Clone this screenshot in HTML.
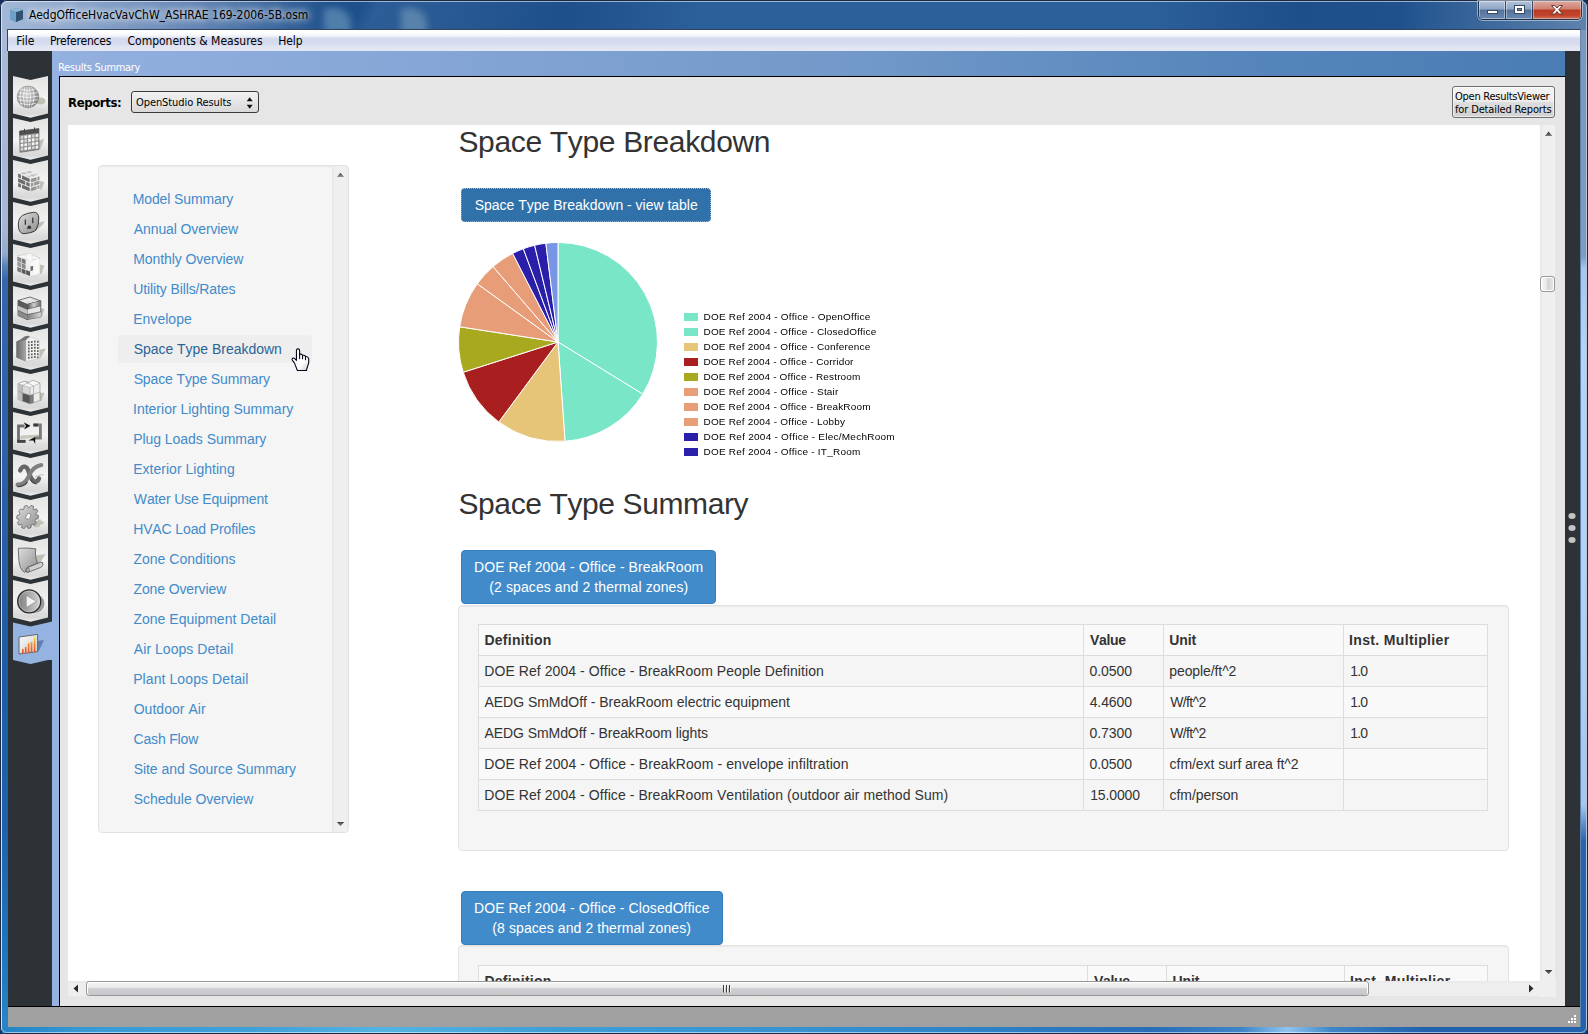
<!DOCTYPE html>
<html lang="en">
<head>
<meta charset="utf-8">
<title>AedgOfficeHvacVavChW_ASHRAE 169-2006-5B.osm</title>
<style>
*{box-sizing:border-box;}
html,body{margin:0;padding:0;}
body{width:1588px;height:1034px;overflow:hidden;position:relative;background:#0d2a5a;font-family:"DejaVu Sans Condensed","DejaVu Sans","Liberation Sans",sans-serif;font-size:11px;color:#000;}
.abs{position:absolute;}
/* ---------- window frame ---------- */
#frame{left:0;top:0;width:1588px;height:1034px;border-radius:7px 7px 6px 6px;overflow:hidden;
 background:
  linear-gradient(90deg,rgba(170,190,220,.95) 0px,rgba(160,182,214,.9) 60px,rgba(120,150,195,.75) 200px,rgba(40,90,150,.2) 330px,rgba(30,80,140,0) 420px),
  linear-gradient(115deg,rgba(255,255,255,0) 330px,rgba(120,160,210,.18) 345px,rgba(120,160,210,.12) 420px,rgba(255,255,255,0) 520px),
  linear-gradient(90deg,#1d4f8a 0,#1d4f8a 560px,#2c609a 700px,#2c609a 1150px,#1d4f8a 1300px,#1f528d 1400px,#5f83ad 1588px);
 box-shadow:inset 0 0 0 1px #1a2a45;}
#frame-hl{left:1px;top:1px;width:1586px;height:1032px;border-radius:6px;border:1px solid rgba(255,255,255,.55);pointer-events:none;}
#leftframe{left:2px;top:30px;width:6px;height:998px;background:linear-gradient(180deg,#a9bbd6 0,#a5b7d3 200px,#93a9cc 224px,#5a82ba 236px,#3466ac 250px,#2b62a9 420px,#1f5ba6 640px,#1e62ad 800px,#1f77bd 930px,#2b86c6 1004px);}
#rightframe{left:1581px;top:30px;width:5px;height:998px;background:linear-gradient(180deg,#7c97bd 0,#7f9bc2 226px,#a6c6ee 238px,#b6d4f7 330px,#b3d1f5 560px,#a6c6ee 775px,#5a8cca 795px,#2a63ad 812px,#2262ad 1004px);}
#bottomframe{left:2px;top:1027px;width:1584px;height:6px;background:linear-gradient(90deg,#2383c4 0,#3a9ad6 90px,#3f9fd8 250px,#55b3e2 380px,#3f9dd6 560px,#3792d0 800px,#2d80c4 1000px,#2a6db7 1150px,#3f86c8 1240px,#8fc4ee 1285px,#3f86c8 1330px,#2262ad 1420px,#2262ad 1588px);}
/* ---------- title bar ---------- */
#title{left:29px;top:7px;font-size:12px;line-height:16px;color:#000;white-space:pre;text-shadow:0 0 6px rgba(255,255,255,.9),0 0 10px rgba(255,255,255,.7),0 0 14px rgba(255,255,255,.5);}
#capbtns{left:1478px;top:1px;width:104px;height:19px;border:1px solid rgba(20,30,50,.75);border-top:none;border-radius:0 0 5px 5px;overflow:hidden;box-shadow:0 0 0 1px rgba(255,255,255,.45);}
#capbtns div{position:absolute;top:0;height:18px;}
#bmin{left:0;width:27px;background:linear-gradient(180deg,#b4c4da 0,#8da5c4 45%,#52729c 50%,#6a89b2 100%);border-right:1px solid rgba(20,30,50,.7);box-shadow:inset 0 0 0 1px rgba(255,255,255,.4);}
#bmax{left:27px;width:27px;background:linear-gradient(180deg,#b4c4da 0,#8da5c4 45%,#52729c 50%,#6a89b2 100%);border-right:1px solid rgba(20,30,50,.7);box-shadow:inset 0 0 0 1px rgba(255,255,255,.4);}
#bclose{left:54px;width:48px;background:linear-gradient(180deg,#dcaaa2 0,#cf7f72 45%,#b93a24 50%,#c1452c 80%,#cf7258 100%);box-shadow:inset 0 0 0 1px rgba(255,255,255,.35);}
/* ---------- menu bar ---------- */
#menubar{left:7px;top:29px;width:1574px;height:22px;border:1px solid #33425e;border-bottom:none;border-right-color:#6d86ab;
 background:linear-gradient(180deg,#ffffff 0,#fbfcfe 4px,#e9ecf6 7px,#d5daee 8px,#d6dbee 14px,#e1e5f3 17px,#e4e8f4 21px);}
#menubar span{position:absolute;top:3px;font-size:12px;line-height:16px;white-space:pre;letter-spacing:-.12px;}
/* ---------- app ---------- */
#app{left:8px;top:51px;width:1572px;height:976px;background:#e6e6e6;}
#lside{left:0;top:0;width:44px;height:955px;background:#2c3235;}
#lstrip{left:44px;top:0;width:7px;height:955px;background:#95b3e0;}
#lline{left:51px;top:25px;width:1px;height:930px;background:#000;}
#rside{left:1557px;top:0;width:15px;height:955px;background:#2c3235;}
#hdr{left:44px;top:0;width:1513px;height:25px;background:linear-gradient(90deg,#93b0df 0,#88a8d8 300px,#7299c9 800px,#5585bb 1200px,#4a7db4 1513px);}
#hdrline{left:51px;top:25px;width:1506px;height:1px;background:#000;}
#hdr span{position:absolute;left:6px;top:10px;color:#fff;font-size:11px;line-height:14px;letter-spacing:-.3px;white-space:pre;}
#status{left:0;top:955px;width:1572px;height:21px;background:#a0a0a0;border-top:1px solid #000;}
/* toolbar */
#replabel{left:60px;top:44px;font-weight:bold;font-size:13px;line-height:16px;letter-spacing:-.38px;font-family:"DejaVu Sans Condensed","DejaVu Sans",sans-serif;}
#combo{left:123px;top:40px;width:128px;height:22px;border:1px solid #3a3a3a;border-radius:3px;background:linear-gradient(180deg,#f1f1f1 0,#e6e6e6 50%,#d9d9d9 100%);}
#combo span{position:absolute;left:4px;top:4px;font-size:11px;line-height:14px;letter-spacing:-.08px;white-space:pre;}
#openbtn{left:1444px;top:35px;width:103px;height:32px;border:1px solid #6e6e6e;border-radius:3px;background:linear-gradient(180deg,#f3f3f3 0,#ececec 49%,#dedede 50%,#d1d1d1 100%);font-size:11px;line-height:13px;letter-spacing:-.08px;padding:3px 0 0 2px;white-space:pre;box-shadow:inset 0 0 0 1px rgba(255,255,255,.6);}
/* ---------- web view ---------- */
#web{left:60px;top:74px;width:1472px;height:856px;background:#fff;overflow:hidden;font-family:"Liberation Sans",Arial,sans-serif;font-size:14px;line-height:20px;color:#333;font-kerning:none;}
#vscroll{left:1532px;top:74px;width:15px;height:855px;background:linear-gradient(90deg,#e6e6e6 0,#efefef 3px,#f0f0f0 100%);}
#hscroll{left:60px;top:930px;width:1471px;height:15px;background:linear-gradient(180deg,#e8e8e8 0,#efefef 3px,#eeeeee 100%);}
#corner{left:1531px;top:929px;width:17px;height:17px;background:#efefef;}
.thumbv{background:linear-gradient(90deg,#f7f7f7 0,#e8e8e8 45%,#d2d2d6 46%,#e6e6e8 100%);border:1px solid #979797;border-radius:3px;box-shadow:inset 0 0 0 1px #fff;}
.thumbh{background:linear-gradient(180deg,#f7f7f7 0,#e8e8e8 45%,#d2d2d5 46%,#c6c6ca 100%);border:1px solid #979797;border-radius:3px;box-shadow:inset 0 1px 0 #fff,inset 1px 0 0 #fff,inset -1px 0 0 #fff;}
h2{position:absolute;margin:0;font-weight:500;font-size:30px;line-height:33px;color:#333;white-space:pre;font-family:"Liberation Sans",Arial,sans-serif;}
.btn{position:absolute;border:1px solid #357ebd;border-radius:4px;background:#428bca;color:#fff;font-size:14px;line-height:20px;padding:6px 12px;text-align:center;white-space:pre;}
.well{position:absolute;background:#f5f5f5;border:1px solid #e3e3e3;border-radius:4px;box-shadow:inset 0 1px 1px rgba(0,0,0,.05);}
table{position:absolute;border-collapse:collapse;border:1px solid #ddd;table-layout:fixed;font-size:14px;line-height:20px;color:#333;}
td,th{border:1px solid #ddd;padding:5px;text-align:left;height:31px;white-space:pre;overflow:hidden;}
tr:nth-child(odd) td,tr:nth-child(odd) th{background:#f9f9f9;}
th{font-weight:bold;}
#nav a{position:absolute;left:19px;width:194px;height:28px;padding:4px 0 4px 15px;color:#428bca;border-radius:4px;white-space:pre;text-decoration:none;}
#nav a.hov{background:#eee;color:#2a6496;}
.leg{position:absolute;left:616px;font-size:10px;line-height:12px;color:#000;white-space:pre;}
.leg i{position:absolute;left:0;top:1px;width:14px;height:8px;}
.leg span{position:absolute;left:19px;top:-1px;transform:scaleY(.88);transform-origin:0 9.500px;}
.btn span{white-space:pre;}
</style>
</head>
<body>
<div id="frame" class="abs"></div>
<div class="abs" style="left:324px;top:8px;width:27px;height:26px;background:rgba(150,190,215,.42);border-radius:2px 16px 0 0;filter:blur(3.500px)"></div><div class="abs" style="left:401px;top:8px;width:26px;height:26px;background:rgba(150,185,205,.42);border-radius:2px 16px 0 0;filter:blur(3.500px)"></div>
<div id="leftframe" class="abs"></div>
<div id="rightframe" class="abs"></div>
<div id="bottomframe" class="abs"></div>
<div id="frame-hl" class="abs"></div>

<!-- title bar -->
<svg class="abs" style="left:8.500px;top:6.500px" width="15" height="16" viewBox="0 0 15 16">
 <polygon points="1,3 7,1 14,3 14,12 7,15 1,12" fill="#4a6f95"/>
 <polygon points="1,3 7,5 7,15 1,12" fill="#6fa0c8"/>
 <polygon points="7,5 14,3 14,12 7,15" fill="#2f4f73"/>
 <polygon points="1,3 7,1 14,3 7,5" fill="#8fb7d8"/>
</svg>
<div id="title" class="abs">AedgOfficeHvacVavChW_ASHRAE 169-2006-5B.osm</div>
<div id="capbtns" class="abs">
 <div id="bmin"><svg width="27" height="18"><rect x="8.500" y="9.500" width="10" height="3" fill="#fff" stroke="#3b4a60" stroke-width="1"/></svg></div>
 <div id="bmax"><svg width="27" height="18"><rect x="8.500" y="4.500" width="10" height="8" fill="#fff" stroke="#3b4a60" stroke-width="1"/><rect x="11.500" y="7.500" width="4" height="2" fill="#6d8bb3" stroke="#3b4a60" stroke-width="1"/></svg></div>
 <div id="bclose"><svg width="48" height="18"><path d="M18.500 4.500h3.200l2.300 2.600 2.300-2.600h3.200l-3.800 4.300 3.800 4.200h-3.300l-2.200-2.500-2.200 2.500h-3.300l3.800-4.200z" fill="#fff" stroke="#5a2a22" stroke-width=".9"/></svg></div>
</div>

<!-- menu bar -->
<div id="menubar" class="abs">
 <span style="left:8.300px;letter-spacing:0">File</span>
 <span style="left:42px;letter-spacing:-.2px">Preferences</span>
 <span style="left:119.500px;letter-spacing:0">Components &amp; Measures</span>
 <span style="left:270.300px">Help</span>
</div>

<!-- application -->
<div id="app" class="abs">
 <div id="hdr" class="abs"><span>Results Summary</span></div>
 <div id="lside" class="abs"></div>
 <div id="lstrip" class="abs"></div>
 <div id="rside" class="abs"></div>
 <div id="hdrline" class="abs"></div>
 <div id="lline" class="abs"></div>
 <!--TABS--><svg class="abs" style="left:0;top:0" width="52" height="955" viewBox="8 51 52 955"><defs><linearGradient id="tg" x1="0" y1="0" x2="0" y2="1"><stop offset="0" stop-color="#e4e4e4"/><stop offset=".12" stop-color="#e7e7e6"/><stop offset=".55" stop-color="#f3f3f3"/><stop offset=".8" stop-color="#dcdcdc"/><stop offset=".9" stop-color="#d9d9d9"/><stop offset="1" stop-color="#efefef"/></linearGradient><radialGradient id="gl" cx=".42" cy=".38" r=".68"><stop offset="0" stop-color="#d2d2d2"/><stop offset=".55" stop-color="#a6a6a6"/><stop offset="1" stop-color="#6e6e6e"/></radialGradient><linearGradient id="gm" x1="0" y1="0" x2="1" y2="1"><stop offset="0" stop-color="#dedede"/><stop offset="1" stop-color="#8e8e8e"/></linearGradient><linearGradient id="gd" x1="0" y1="0" x2="1" y2="0"><stop offset="0" stop-color="#6a6a6a"/><stop offset="1" stop-color="#a8a8a8"/></linearGradient><linearGradient id="gh" x1="0" y1="0" x2="1" y2="0"><stop offset="0" stop-color="#4a4a4a"/><stop offset=".5" stop-color="#cfcfcf"/><stop offset="1" stop-color="#6a6a6a"/></linearGradient><linearGradient id="gp" x1="0" y1="0" x2="1" y2="0"><stop offset="0" stop-color="#7d7d7d"/><stop offset="1" stop-color="#d5d5d5"/></linearGradient><linearGradient id="gb" x1="0" y1="1" x2="0" y2="0"><stop offset="0" stop-color="#e2502a"/><stop offset=".6" stop-color="#f08a2a"/><stop offset="1" stop-color="#fbd23a"/></linearGradient><linearGradient id="gw" x1="0" y1="0" x2="1" y2="1"><stop offset="0" stop-color="#fafafa"/><stop offset="1" stop-color="#cfcfcf"/></linearGradient></defs><polygon points="13,76 30.5,80 48,76 48,113.6 30.5,117.8 13,113.6" fill="url(#tg)"/><polygon points="13,118 30.5,122 48,118 48,155.6 30.5,159.8 13,155.6" fill="url(#tg)"/><polygon points="13,160 30.5,164 48,160 48,197.6 30.5,201.8 13,197.6" fill="url(#tg)"/><polygon points="13,202 30.5,206 48,202 48,239.6 30.5,243.8 13,239.6" fill="url(#tg)"/><polygon points="13,244 30.5,248 48,244 48,281.6 30.5,285.8 13,281.6" fill="url(#tg)"/><polygon points="13,286 30.5,290 48,286 48,323.6 30.5,327.8 13,323.6" fill="url(#tg)"/><polygon points="13,328 30.5,332 48,328 48,365.6 30.5,369.8 13,365.6" fill="url(#tg)"/><polygon points="13,370 30.5,374 48,370 48,407.6 30.5,411.8 13,407.6" fill="url(#tg)"/><polygon points="13,412 30.5,416 48,412 48,449.6 30.5,453.8 13,449.6" fill="url(#tg)"/><polygon points="13,454 30.5,458 48,454 48,491.6 30.5,495.8 13,491.6" fill="url(#tg)"/><polygon points="13,496 30.5,500 48,496 48,533.6 30.5,537.8 13,533.6" fill="url(#tg)"/><polygon points="13,538 30.5,542 48,538 48,575.6 30.5,579.8 13,575.6" fill="url(#tg)"/><polygon points="13,580 30.5,584 48,580 48,617.6 30.5,621.8 13,617.6" fill="url(#tg)"/><polygon points="13,622.5 30.5,626.5 48,622.5 52,621.5 59,621.5 59,660 52,660 48,660 30.5,664 13,660" fill="#95b3e0"/><g transform="translate(13 76)"><ellipse cx="27.5" cy="25" rx="5" ry="3.600" fill="#bfc1b5"/><circle cx="15" cy="20.900" r="10.900" fill="url(#gl)"/><path d="M6.8 12.9Q15 15.9 23.2 12.9M4.7 16.5Q15 19.5 25.3 16.5M4.1 20.1Q15 23.1 25.9 20.1M4.7 23.7Q15 26.7 25.3 23.7M6.8 27.3Q15 30.3 23.2 27.3M9.9 10.300Q3.9 20.900 9.9 31.500M11.9 10.300Q8.9 20.900 11.9 31.500M14.0 10.300Q14.0 20.900 14.0 31.500M16.1 10.300Q19.1 20.900 16.1 31.500M18.1 10.300Q24.1 20.900 18.1 31.500" fill="none" stroke="#ffffff" stroke-width=".8" opacity=".8"/><circle cx="15" cy="20.900" r="10.900" fill="none" stroke="#8a8a8a" stroke-width=".6"/></g><g transform="translate(13 118)"><polygon points="26,22.500 31.200,20.800 27.600,31 26,31.500" fill="#bfc1b5"/><polygon points="6.500,13 26,10.500 26,31.500 7,34.300" fill="#8f8f8f" stroke="#555" stroke-width=".6"/><polygon points="6.500,13 26,10.500 26,14.800 6.600,17.300" fill="#4f4f4f"/><path d="M11.500 10.800v4M21.500 9.500v4" stroke="#444" stroke-width="1"/><polygon points="7.60,18.16 10.30,17.81 10.30,20.61 7.60,20.96" fill="#cfcfcf"/><polygon points="11.35,17.68 14.05,17.33 14.05,20.13 11.35,20.48" fill="#f4f4f4"/><polygon points="15.10,17.20 17.80,16.85 17.80,19.65 15.10,20.00" fill="#f4f4f4"/><polygon points="18.85,16.72 21.55,16.37 21.55,19.17 18.85,19.52" fill="#cfcfcf"/><polygon points="22.60,16.24 25.30,15.89 25.30,18.69 22.60,19.04" fill="#f4f4f4"/><polygon points="7.60,22.06 10.30,21.71 10.30,24.51 7.60,24.86" fill="#f4f4f4"/><polygon points="11.35,21.58 14.05,21.23 14.05,24.03 11.35,24.38" fill="#cfcfcf"/><polygon points="15.10,21.10 17.80,20.75 17.80,23.55 15.10,23.90" fill="#f4f4f4"/><polygon points="18.85,20.62 21.55,20.27 21.55,23.07 18.85,23.42" fill="#f4f4f4"/><polygon points="22.60,20.14 25.30,19.79 25.30,22.59 22.60,22.94" fill="#cfcfcf"/><polygon points="7.60,25.96 10.30,25.61 10.30,28.41 7.60,28.76" fill="#f4f4f4"/><polygon points="11.35,25.48 14.05,25.13 14.05,27.93 11.35,28.28" fill="#f4f4f4"/><polygon points="15.10,25.00 17.80,24.65 17.80,27.45 15.10,27.80" fill="#cfcfcf"/><polygon points="18.85,24.52 21.55,24.17 21.55,26.97 18.85,27.32" fill="#f4f4f4"/><polygon points="22.60,24.04 25.30,23.69 25.30,26.49 22.60,26.84" fill="#f4f4f4"/><polygon points="7.60,29.86 10.30,29.51 10.30,32.31 7.60,32.66" fill="#cfcfcf"/><polygon points="11.35,29.38 14.05,29.03 14.05,31.83 11.35,32.18" fill="#f4f4f4"/><polygon points="15.10,28.90 17.80,28.55 17.80,31.35 15.10,31.70" fill="#f4f4f4"/><polygon points="18.85,28.42 21.55,28.07 21.55,30.87 18.85,31.22" fill="#cfcfcf"/><polygon points="22.60,27.94 25.30,27.59 25.30,30.39 22.60,30.74" fill="#f4f4f4"/></g><g transform="translate(13 160)"><polygon points="26.900,21 31.500,22 28.500,29.500 26.900,30" fill="#bfc1b5"/><polygon points="4.60,12.60 16.70,10.00 26.90,15.50 17.30,18.30" fill="#f4f4f4"/><polygon points="4.60,12.60 17.30,18.30 17.30,32.10 4.60,27.00" fill="#f0f0f0"/><polygon points="17.30,18.30 26.90,15.50 26.90,28.80 17.30,32.10" fill="#f6f6f6"/><polygon points="5.11,13.55 7.90,14.79 7.90,18.50 5.11,17.28" fill="#6c6c6c"/><polygon points="24.40,16.90 26.52,16.28 26.52,19.74 24.40,20.39" fill="#989898"/><polygon points="8.92,15.25 16.66,18.71 16.66,22.30 8.92,18.94" fill="#6c6c6c"/><polygon points="17.78,18.85 23.64,17.13 23.64,20.63 17.78,22.43" fill="#989898"/><polygon points="5.11,18.22 12.22,21.29 12.22,24.94 5.11,21.96" fill="#6c6c6c"/><polygon points="21.14,22.28 26.52,20.61 26.52,24.07 21.14,25.82" fill="#989898"/><polygon points="13.24,21.72 16.66,23.20 16.66,26.80 13.24,25.36" fill="#6c6c6c"/><polygon points="17.78,23.33 20.37,22.52 20.37,26.07 17.78,26.91" fill="#989898"/><polygon points="5.11,22.89 7.90,24.05 7.90,27.76 5.11,26.63" fill="#6c6c6c"/><polygon points="24.40,25.63 26.52,24.94 26.52,28.40 24.40,29.12" fill="#989898"/><polygon points="8.92,24.48 16.66,27.70 16.66,31.29 8.92,28.17" fill="#6c6c6c"/><polygon points="17.78,27.80 23.64,25.88 23.64,29.38 17.78,31.38" fill="#989898"/><polygon points="6.82,12.96 11.20,11.99 14.91,13.79 10.82,14.78" fill="#c2c2c2"/><polygon points="12.39,11.73 16.77,10.76 20.10,12.52 16.01,13.52" fill="#c2c2c2"/><polygon points="12.82,15.69 14.95,15.15 18.79,16.95 16.82,17.51" fill="#c2c2c2"/><polygon points="16.01,14.87 19.63,13.95 23.12,15.73 19.77,16.67" fill="#c2c2c2"/><polygon points="20.49,13.73 21.98,13.35 25.29,15.12 23.91,15.51" fill="#c2c2c2"/></g><g transform="translate(13 202)"><polygon points="24.500,21 31.500,19 30,22.500 23.500,28" fill="#bfc1b5"/><path d="M9.700 13.300Q14 11 20.500 10.300Q25.500 10 25.800 16Q26 23 23 28Q21 30.500 11 31.700Q5.500 31.500 5.300 23Q5.300 16 9.700 13.300Z" fill="url(#gm)" stroke="#2e2e2e" stroke-width=".9"/><path d="M12.300 17.500v5.200M19.800 15.600v5.600" stroke="#222" stroke-width="1.100" fill="none"/><path d="M14.200 27Q14.300 23.600 16.300 23.500Q18.300 23.500 18.300 26.400Z" fill="#333"/></g><g transform="translate(13 244)"><polygon points="26.600,20.500 31.500,21.500 28.500,29.500 26.600,30.500" fill="#bfc1b5"/><polygon points="4.00,12.10 16.70,9.30 26.60,14.00 17.30,17.20" fill="#f6f6f6" stroke="#9a9a9a" stroke-width=".4"/><polygon points="4.00,12.10 17.30,17.20 17.30,32.50 4.00,27.40" fill="#f4f4f4"/><polygon points="17.30,17.20 26.60,14.00 26.60,29.70 17.30,32.50" fill="#fafafa" stroke="#b0b0b0" stroke-width=".3"/><polygon points="4.27,12.51 8.17,14.00 8.17,18.49 4.27,17.00" fill="#8a8a8a"/><polygon points="17.49,17.44 20.21,16.51 20.21,21.03 17.49,21.93" fill="#f8f8f8"/><polygon points="8.70,14.21 12.60,15.70 12.60,20.19 8.70,18.70" fill="#787878"/><polygon points="20.59,16.38 23.31,15.44 23.31,20.01 20.59,20.91" fill="#f8f8f8"/><polygon points="13.13,15.91 17.03,17.40 17.03,21.89 13.13,20.40" fill="#f0f0f0"/><polygon points="23.69,15.31 26.41,14.38 26.41,18.98 23.69,19.88" fill="#f8f8f8"/><polygon points="4.27,17.61 8.17,19.10 8.17,23.59 4.27,22.10" fill="#9c9c9c"/><polygon points="17.49,22.54 20.21,21.65 20.21,26.17 17.49,27.04" fill="#6c6c6c"/><polygon points="8.70,19.31 12.60,20.80 12.60,25.29 8.70,23.80" fill="#8a8a8a"/><polygon points="20.59,21.53 23.31,20.63 23.31,25.19 20.59,26.05" fill="#f8f8f8"/><polygon points="13.13,21.01 17.03,22.50 17.03,26.99 13.13,25.50" fill="#ececec"/><polygon points="23.69,20.51 26.41,19.61 26.41,24.21 23.69,25.07" fill="#f8f8f8"/><polygon points="4.27,22.71 8.17,24.20 8.17,28.69 4.27,27.20" fill="#7c7c7c"/><polygon points="17.49,27.65 20.21,26.79 20.21,31.31 17.49,32.14" fill="#f2f2f2"/><polygon points="8.70,24.41 12.60,25.90 12.60,30.39 8.70,28.90" fill="#5c5c5c"/><polygon points="20.59,26.67 23.31,25.81 23.31,30.38 20.59,31.20" fill="#f8f8f8"/><polygon points="13.13,26.11 17.03,27.60 17.03,32.09 13.13,30.60" fill="#585858"/><polygon points="23.69,25.70 26.41,24.84 26.41,29.44 23.69,30.27" fill="#f8f8f8"/><polygon points="4.91,12.22 8.34,11.45 11.45,12.71 8.25,13.51" fill="#fbfbfb"/><polygon points="9.10,11.28 12.53,10.51 15.35,11.74 12.15,12.54" fill="#ededed"/><polygon points="13.28,10.34 16.72,9.57 19.25,10.77 16.05,11.56" fill="#fbfbfb"/><polygon points="9.31,13.92 12.43,13.11 15.54,14.37 12.65,15.20" fill="#ededed"/><polygon points="13.12,12.93 16.24,12.13 19.06,13.35 16.17,14.19" fill="#fbfbfb"/><polygon points="16.93,11.95 20.05,11.14 22.59,12.34 19.70,13.17" fill="#ededed"/><polygon points="13.71,15.61 16.52,14.77 19.63,16.03 17.05,16.90" fill="#fbfbfb"/><polygon points="17.14,14.58 19.95,13.74 22.78,14.97 20.20,15.84" fill="#ededed"/><polygon points="20.57,13.56 23.39,12.71 25.92,13.91 23.34,14.78" fill="#fbfbfb"/></g><g transform="translate(13 286)"><polygon points="27.800,22 31.500,23 29,30.500 27.800,31" fill="#bfc1b5"/><polygon points="5,14.500 17,11 27.800,15 14,18.500" fill="url(#gw)" stroke="#333" stroke-width=".7"/><polygon points="5,14.500 14,18.500 14,33.500 5,29.500" fill="url(#gd)" stroke="#333" stroke-width=".7"/><polygon points="14,18.500 27.800,15 27.800,31 14,33.500" fill="#e6e6e6" stroke="#333" stroke-width=".7"/><polygon points="14,18.500 27.800,15 27.800,19.800 14,23.300" fill="url(#gh)"/><polygon points="14,28.600 27.800,25.800 27.800,31 14,33.500" fill="url(#gp)"/><polygon points="5,14.500 14,18.500 14,23.300 5,19.300" fill="#5a5a5a"/><polygon points="5,24.500 14,28.600 14,33.500 5,29.500" fill="#8a8a8a"/><polygon points="5,19.300 14,23.300 14,28.600 5,24.500" fill="#c4c4c4"/><path d="M5 19.300l9 4 13.800-3.500M5 24.500l9 4.100 13.800-2.800" stroke="#444" stroke-width=".6" fill="none"/></g><g transform="translate(13 328)"><polygon points="26.500,21.500 33,20.500 27.500,30 26.500,30.500" fill="#bfc1b5"/><path d="M3.500 29.500V13.500L8.500 10.800Q13 6.500 17 8.500L13 12V33.500Z" fill="#737373"/><path d="M13 12Q17 8 21 9.500L26.500 12.500V30.500L13 33.500Z" fill="#f0f0f0" stroke="#bbb" stroke-width=".4"/><path d="M3.500 13.500L13 12V33.500L3.500 29.500Z" fill="url(#gd)"/><path d="M15.2 13.3h1.300v1.900h-1.300zM18.2 13.0h1.300v1.900h-1.300zM21.2 12.6h1.300v1.900h-1.300zM24.2 12.8h1.300v1.900h-1.300zM15.2 16.4h1.300v1.900h-1.300zM18.2 16.1h1.300v1.900h-1.300zM21.2 15.7h1.300v1.900h-1.300zM24.2 16.0h1.300v1.900h-1.300zM15.2 19.5h1.300v1.900h-1.300zM18.2 19.1h1.300v1.900h-1.300zM21.2 18.8h1.300v1.900h-1.300zM24.2 19.1h1.300v1.900h-1.300zM15.2 22.6h1.300v1.900h-1.300zM18.2 22.2h1.300v1.900h-1.300zM21.2 21.9h1.300v1.900h-1.300zM24.2 22.2h1.300v1.900h-1.300zM15.2 25.7h1.300v1.900h-1.300zM18.2 25.4h1.300v1.900h-1.300zM21.2 25.0h1.300v1.900h-1.300zM24.2 25.3h1.300v1.900h-1.300zM15.2 28.8h1.300v1.900h-1.300zM18.2 28.4h1.300v1.900h-1.300zM21.2 28.1h1.300v1.900h-1.300zM24.2 28.4h1.300v1.900h-1.300z" fill="#3c3c3c"/></g><g transform="translate(13 370)"><polygon points="27,22.500 31.500,23 28.500,31 27,31.500" fill="#bfc1b5"/><polygon points="5,13.500 12,11.300 16,12.500 20,10.300 27,13.300 27,30.500 17,33.800 5,29.500" fill="#ececec" stroke="#777" stroke-width=".5"/><polygon points="5,13.500 9.500,15.300 9.500,31.100 5,29.500" fill="#bdbdbd"/><polygon points="9.500,22.800 17,25.300 17,33.800 9.500,31.100" fill="#555"/><polygon points="17,25.300 20.500,24.200 20.500,32.700 17,33.800" fill="#7a7a7a"/><polygon points="9.500,15.300 17,17.500 17,25.300 9.500,22.800" fill="#d8d8d8"/><polygon points="5,13.500 12,11.300 16,12.500 20,10.300 27,13.300 20.500,16 17,17.500 9.500,15.300" fill="#f8f8f8" stroke="#888" stroke-width=".4"/><path d="M12 11.300l8.500 4.700M9.500 15.300l6.500-2.800M20.500 16v16.700M9.500 15.300v15.800M17 17.500v16.300M5 21.500l4.500 1.300 7.500 2.500 10-3.300" stroke="#8a8a8a" stroke-width=".5" fill="none"/></g><g transform="translate(13 412)"><polygon points="8,23.600 29.500,22.300 27,25.600 7,27" fill="#c6c8bd"/><path d="M11.600 14H5.500V29.300H12.500" fill="none" stroke="#6f6f6f" stroke-width="2.800"/><path d="M20.400 13H27.400V26H21.800" fill="none" stroke="#7a7a7a" stroke-width="2.800"/><path d="M4.100 29.300h8.400" stroke="#444" stroke-width="2.800"/><path d="M20.400 13h4.500" stroke="#3c3c3c" stroke-width="2.800"/><polygon points="10.600,10.200 17.500,13.700 11.100,17.400 13,13.700" fill="#0c0c0c"/><polygon points="15.300,28.500 22.200,25.100 22.200,31.900 20.400,28.500" fill="#0c0c0c"/></g><g transform="translate(13 454)"><path d="M22 23Q26 20.800 30.500 20.600" stroke="#c6c8bd" stroke-width="1.400" fill="none"/><path d="M7.200 16.400Q9 12.300 11.800 12.700Q14.300 13.200 15.800 18Q18.800 27.800 22.600 27.600Q25 27.400 26 24.600" fill="none" stroke="#666" stroke-width="4.400" stroke-linecap="round"/><path d="M4.600 30.700Q11.800 30.800 15.600 22.500Q19.500 12.500 28.200 11" fill="none" stroke="#808080" stroke-width="4.200" stroke-linecap="round"/><path d="M4.300 32.500Q10.500 33 14.500 28" fill="none" stroke="#4a4a4a" stroke-width="1.300"/><path d="M17.500 25.500Q20 30.200 24 29.700" fill="none" stroke="#4a4a4a" stroke-width="1.200"/></g><g transform="translate(13 496)"><path d="M19 28.500Q21 25 24 25.500L25 23.500 28 23.500 28.500 25.500 31 25.500 30 28 27.500 28.500 26 31 22 31.500Z" fill="#bfc1b5"/><polygon points="25.55,19.47 25.18,22.53 22.58,23.39 22.18,24.35 23.46,26.64 21.51,29.11 19.13,28.22 18.31,28.81 17.99,31.66 15.20,32.60 13.95,30.29 13.02,30.29 11.22,32.60 8.66,31.66 9.02,28.81 8.34,28.22 5.74,29.11 4.39,26.64 6.22,24.35 6.04,23.39 3.65,22.53 4.02,19.47 6.62,18.61 7.02,17.65 5.74,15.36 7.69,12.89 10.07,13.78 10.89,13.19 11.21,10.34 14.00,9.40 15.25,11.71 16.18,11.71 17.98,9.40 20.54,10.34 20.18,13.19 20.86,13.78 23.46,12.89 24.81,15.36 22.98,17.65 23.16,18.61" fill="url(#gm)" stroke="#666" stroke-width=".8" stroke-linejoin="round"/><ellipse cx="15.300" cy="20.300" rx="2.100" ry="3.300" transform="rotate(32 15.300 20.300)" fill="#f8f8f8" stroke="#666" stroke-width=".6"/></g><g transform="translate(13 538)"><polygon points="23,17.500 32.500,16 27,25 30.500,24 28.500,28.500 24,27" fill="#bfc1b5"/><path d="M5.300 10.300Q14 9.500 22.800 10.800Q21.500 17 24.500 25.500L14.500 29.500Q13.500 33 11.500 34.500Q6.500 31 5.800 22Z" fill="url(#gm)" stroke="#444" stroke-width=".7"/><path d="M14.500 29.500L27.300 24.300Q30.500 23.500 30 26.500Q29.600 28.500 27.500 29.500L15 34.300Q12.500 34.800 12.800 32Q13.200 30 14.500 29.500Z" fill="#d0d0d0" stroke="#444" stroke-width=".7"/><ellipse cx="15" cy="32" rx="1.500" ry="2" fill="#b0b0b0" stroke="#444" stroke-width=".5"/></g><g transform="translate(13 580)"><ellipse cx="21.500" cy="23.500" rx="10" ry="9.500" fill="#9c9c96"/><circle cx="16.200" cy="21.400" r="11.500" fill="url(#gp)" stroke="#2a2a2a" stroke-width="1.300"/><circle cx="16.200" cy="21.400" r="10.200" fill="none" stroke="#e8e8e8" stroke-width=".5" opacity=".7"/><polygon points="13.300,15.500 23.500,21.300 13.300,27.500" fill="#f2f2f2" stroke="#777" stroke-width=".5"/></g><g transform="translate(13 622)"><polygon points="24.600,19 31,18 26,28.500 24.600,29.500" fill="#5f7fb0"/><polygon points="6,15 24.600,12.400 24.600,29.600 6,32" fill="url(#gw)" stroke="#666" stroke-width="1"/><path d="M9.800 31V27.500M12.700 30.600V25.500M15.600 30.200V21.800M18.500 29.800V20.600M21.600 29.400V16.200" stroke="url(#gb)" stroke-width="1.700" stroke-linecap="round"/></g></svg><!--/TABS-->

 <div id="replabel" class="abs">Reports:</div>
 <div id="combo" class="abs"><span>OpenStudio Results</span>
  <svg class="abs" style="left:113px;top:4px" width="9" height="14"><polygon points="4.700,1.300 7.700,5.300 1.700,5.300" fill="#111"/><polygon points="1.700,8.700 7.700,8.700 4.700,12.700" fill="#111"/></svg>
 </div>
 <div id="openbtn" class="abs"><span style="letter-spacing:-.25px">Open ResultsViewer</span>
<span style="letter-spacing:-.14px">for Detailed Reports</span></div>

 <div id="web" class="abs">
  <!--WEB-->
  <div class="well" id="nav" style="left:30px;top:40px;width:251px;height:668px;">
  <a style="top:19px;padding-left:14.75px;letter-spacing:-0.120px">Model Summary</a>
  <a style="top:49px;padding-left:15.87px;letter-spacing:-0.110px">Annual Overview</a>
  <a style="top:79px;padding-left:15.15px;letter-spacing:-0.076px">Monthly Overview</a>
  <a style="top:109px;padding-left:15.22px;letter-spacing:-0.109px">Utility Bills/Rates</a>
  <a style="top:139px;padding-left:15.15px;letter-spacing:0.042px">Envelope</a>
  <a class="hov" style="top:169px;padding-left:15.66px;letter-spacing:-0.026px">Space Type Breakdown</a>
  <a style="top:199px;padding-left:15.66px;letter-spacing:-0.131px">Space Type Summary</a>
  <a style="top:229px;padding-left:15.01px;letter-spacing:0.001px">Interior Lighting Summary</a>
  <a style="top:259px;padding-left:15.15px;letter-spacing:-0.039px">Plug Loads Summary</a>
  <a style="top:289px;padding-left:15.15px;letter-spacing:0.024px">Exterior Lighting</a>
  <a style="top:319px;padding-left:15.84px;letter-spacing:-0.154px">Water Use Equipment</a>
  <a style="top:349px;padding-left:15.15px;letter-spacing:-0.121px">HVAC Load Profiles</a>
  <a style="top:379px;padding-left:15.46px;letter-spacing:0.007px">Zone Conditions</a>
  <a style="top:409px;padding-left:15.46px;letter-spacing:-0.111px">Zone Overview</a>
  <a style="top:439px;padding-left:15.46px;letter-spacing:0.013px">Zone Equipment Detail</a>
  <a style="top:469px;padding-left:15.87px;letter-spacing:0.042px">Air Loops Detail</a>
  <a style="top:499px;padding-left:15.15px;letter-spacing:0.092px">Plant Loops Detail</a>
  <a style="top:529px;padding-left:15.64px;letter-spacing:0.041px">Outdoor Air</a>
  <a style="top:559px;padding-left:15.59px;letter-spacing:-0.182px">Cash Flow</a>
  <a style="top:589px;padding-left:15.66px;letter-spacing:-0.043px">Site and Source Summary</a>
  <a style="top:619px;padding-left:15.66px;letter-spacing:-0.051px">Schedule Overview</a>
  <div class="abs" style="left:233px;top:0;width:16px;height:666px;background:linear-gradient(90deg,#e7e7e7 0,#efefef 3px,#f0f0f0 13px,#ebebeb 100%);border-radius:0 3px 3px 0"></div>
  <svg class="abs" style="left:237px;top:6px" width="9" height="6"><defs><linearGradient id="an" x1="0" y1="0" x2="0" y2="1"><stop offset="0" stop-color="#3c3c3c"/><stop offset="1" stop-color="#9a9a9a"/></linearGradient></defs><polygon points="4.500,0.800 8.200,5 0.800,5" fill="url(#an)"/></svg>
  <svg class="abs" style="left:237px;top:655px" width="9" height="6"><polygon points="0.800,1 8.200,1 4.500,5.200" fill="url(#an)"/></svg>
  </div>
  <h2 style="left:390.44px;top:0px;letter-spacing:-0.337px">Space Type Breakdown</h2>
  <div class="btn" style="left:393px;top:63px;width:250px;height:34px;padding-left:12.76px;padding-right:0;text-align:left;letter-spacing:-0.012px;background:#3071a9;border-color:#285e8e;outline:1px dotted #9ec3e6;outline-offset:-1px">Space Type Breakdown - view table</div>
  <svg class="abs" style="left:385px;top:112px" width="210" height="210" viewBox="385 112 210 210"><path d="M490 217L490.00 117.50A99.5 99.5 0 0 1 574.75 269.14Z" fill="#78e6c7" stroke="#fff" stroke-width="1" stroke-linejoin="round"/><path d="M490 217L574.75 269.14A99.5 99.5 0 0 1 497.03 316.25Z" fill="#78e6c7" stroke="#fff" stroke-width="1" stroke-linejoin="round"/><path d="M490 217L497.03 316.25A99.5 99.5 0 0 1 430.82 296.98Z" fill="#e6c478" stroke="#fff" stroke-width="1" stroke-linejoin="round"/><path d="M490 217L430.82 296.98A99.5 99.5 0 0 1 395.21 247.25Z" fill="#a91f1f" stroke="#fff" stroke-width="1" stroke-linejoin="round"/><path d="M490 217L395.21 247.25A99.5 99.5 0 0 1 391.67 201.78Z" fill="#a9a91f" stroke="#fff" stroke-width="1" stroke-linejoin="round"/><path d="M490 217L391.67 201.78A99.5 99.5 0 0 1 409.30 158.80Z" fill="#e69d78" stroke="#fff" stroke-width="1" stroke-linejoin="round"/><path d="M490 217L409.30 158.80A99.5 99.5 0 0 1 425.05 141.62Z" fill="#e69d78" stroke="#fff" stroke-width="1" stroke-linejoin="round"/><path d="M490 217L425.05 141.62A99.5 99.5 0 0 1 444.67 128.42Z" fill="#e69d78" stroke="#fff" stroke-width="1" stroke-linejoin="round"/><path d="M490 217L444.67 128.42A99.5 99.5 0 0 1 455.32 123.74Z" fill="#291fa9" stroke="#fff" stroke-width="1" stroke-linejoin="round"/><path d="M490 217L455.32 123.74A99.5 99.5 0 0 1 466.60 120.29Z" fill="#291fa9" stroke="#fff" stroke-width="1" stroke-linejoin="round"/><path d="M490 217L466.60 120.29A99.5 99.5 0 0 1 477.87 118.24Z" fill="#291fa9" stroke="#fff" stroke-width="1" stroke-linejoin="round"/><path d="M490 217L477.87 118.24A99.5 99.5 0 0 1 490.00 117.50Z" fill="#7895e6" stroke="#fff" stroke-width="1" stroke-linejoin="round"/></svg>
  <div class="leg" style="top:187px"><i style="background:#78e6c7"></i><span style="left:19.48px;letter-spacing:0.223px">DOE Ref 2004 - Office - OpenOffice</span></div>
  <div class="leg" style="top:202px"><i style="background:#78e6c7"></i><span style="left:19.48px;letter-spacing:0.188px">DOE Ref 2004 - Office - ClosedOffice</span></div>
  <div class="leg" style="top:217px"><i style="background:#e6c478"></i><span style="left:19.48px;letter-spacing:0.189px">DOE Ref 2004 - Office - Conference</span></div>
  <div class="leg" style="top:232px"><i style="background:#a91f1f"></i><span style="left:19.48px;letter-spacing:0.159px">DOE Ref 2004 - Office - Corridor</span></div>
  <div class="leg" style="top:247px"><i style="background:#a9a91f"></i><span style="left:19.48px;letter-spacing:0.149px">DOE Ref 2004 - Office - Restroom</span></div>
  <div class="leg" style="top:262px"><i style="background:#e69d78"></i><span style="left:19.48px;letter-spacing:0.193px">DOE Ref 2004 - Office - Stair</span></div>
  <div class="leg" style="top:277px"><i style="background:#e69d78"></i><span style="left:19.48px;letter-spacing:0.167px">DOE Ref 2004 - Office - BreakRoom</span></div>
  <div class="leg" style="top:292px"><i style="background:#e69d78"></i><span style="left:19.48px;letter-spacing:0.192px">DOE Ref 2004 - Office - Lobby</span></div>
  <div class="leg" style="top:307px"><i style="background:#291fa9"></i><span style="left:19.48px;letter-spacing:0.247px">DOE Ref 2004 - Office - Elec/MechRoom</span></div>
  <div class="leg" style="top:322px"><i style="background:#291fa9"></i><span style="left:19.48px;letter-spacing:0.228px">DOE Ref 2004 - Office - IT_Room</span></div>
  <h2 style="left:390.44px;top:362px;letter-spacing:-0.392px">Space Type Summary</h2>
  <div class="btn" style="left:393px;top:425px;width:255px;height:54px;padding:0"><span class="abs" style="left:12.05px;top:6px;letter-spacing:0.086px">DOE Ref 2004 - Office - BreakRoom</span><span class="abs" style="left:27.33px;top:26px;letter-spacing:0.094px">(2 spaces and 2 thermal zones)</span></div>
  <div class="well" style="left:390px;top:480px;width:1051px;height:246px"></div>
  <table style="left:410px;top:499px;width:1009px"><colgroup><col style="width:605px"><col style="width:80px"><col style="width:180px"><col style="width:144px"></colgroup><tr><th style="padding-left:5.46px;letter-spacing:0.262px">Definition</th><th style="padding-left:5.90px;letter-spacing:-0.319px">Value</th><th style="padding-left:5.36px;letter-spacing:-0.101px">Unit</th><th style="padding-left:5.06px;letter-spacing:0.344px">Inst. Multiplier</th></tr><tr><td style="padding-left:5.25px;letter-spacing:0.068px">DOE Ref 2004 - Office - BreakRoom People Definition</td><td style="padding-left:5.45px;letter-spacing:-0.045px">0.0500</td><td style="padding-left:5.30px;letter-spacing:-0.096px">people/ft^2</td><td style="padding-left:6.23px;letter-spacing:-0.874px">1.0</td></tr><tr><td style="padding-left:5.47px;letter-spacing:-0.024px">AEDG SmMdOff - BreakRoom electric equipment</td><td style="padding-left:5.68px;letter-spacing:-0.090px">4.4600</td><td style="padding-left:6.14px;letter-spacing:-0.615px">W/ft^2</td><td style="padding-left:6.23px;letter-spacing:-0.874px">1.0</td></tr><tr><td style="padding-left:5.47px;letter-spacing:-0.069px">AEDG SmMdOff - BreakRoom lights</td><td style="padding-left:5.45px;letter-spacing:-0.045px">0.7300</td><td style="padding-left:6.14px;letter-spacing:-0.615px">W/ft^2</td><td style="padding-left:6.23px;letter-spacing:-0.874px">1.0</td></tr><tr><td style="padding-left:5.25px;letter-spacing:0.085px">DOE Ref 2004 - Office - BreakRoom - envelope infiltration</td><td style="padding-left:5.45px;letter-spacing:-0.045px">0.0500</td><td style="padding-left:5.61px;letter-spacing:-0.061px">cfm/ext surf area ft^2</td><td></td></tr><tr><td style="padding-left:5.25px;letter-spacing:0.070px">DOE Ref 2004 - Office - BreakRoom Ventilation (outdoor air method Sum)</td><td style="padding-left:6.23px;letter-spacing:-0.132px">15.0000</td><td style="padding-left:5.61px;letter-spacing:-0.072px">cfm/person</td><td></td></tr></table>
  <div class="btn" style="left:393px;top:766px;width:262px;height:54px;padding:0"><span class="abs" style="left:12.05px;top:6px;letter-spacing:0.084px">DOE Ref 2004 - Office - ClosedOffice</span><span class="abs" style="left:30.33px;top:26px;letter-spacing:0.087px">(8 spaces and 2 thermal zones)</span></div>
  <div class="well" style="left:390px;top:820px;width:1051px;height:300px"></div>
  <table style="left:410px;top:840px;width:1009px"><colgroup><col style="width:609px"><col style="width:79px"><col style="width:178px"><col style="width:143px"></colgroup><tr><th style="padding-left:5.46px;letter-spacing:0.262px">Definition</th><th style="padding-left:5.90px;letter-spacing:-0.319px">Value</th><th style="padding-left:5.56px;letter-spacing:-0.101px">Unit</th><th style="padding-left:5.06px;letter-spacing:0.344px">Inst. Multiplier</th></tr><tr><td>DOE Ref 2004 - Office - ClosedOffice People Definition</td><td>0.0050</td><td>people/ft^2</td><td>1.0</td></tr></table>
  <svg class="abs" style="left:222px;top:222px" width="22" height="26" viewBox="0 0 22 26"><defs><linearGradient id="hc" x1=".3" y1=".3" x2=".9" y2="1"><stop offset="0" stop-color="#fff"/><stop offset=".55" stop-color="#fff"/><stop offset="1" stop-color="#cfcfcf"/></linearGradient></defs><path d="M6.450 13.300V3.400Q6.450 1.900 8 1.900Q9.600 1.900 9.600 3.400V7.200Q11.700 6.900 12.600 8.300Q14.600 8.100 15.500 9.300Q17.600 9.300 18.700 11.500V15.800L16.500 22.800V23.500H7.400L4.400 15.900L2.400 13.400Q1.500 12.200 2.600 11.300Q3.800 10.600 5 11.800Z" fill="url(#hc)" stroke="#05051a" stroke-width="1.100" stroke-linejoin="round"/><path d="M9.600 7.200V11.600M12.550 8.600V11.700M15.500 9.600V12.800" stroke="#05051a" stroke-width="1.100" fill="none" stroke-linecap="round"/></svg>
  <!--/WEB-->
 </div>
 <div id="vscroll" class="abs"></div>
 <div id="hscroll" class="abs"></div>
 <div id="corner" class="abs"></div>
 <!--SCROLL-->
 <svg class="abs" style="left:1536px;top:80px" width="9" height="6"><defs><linearGradient id="au" x1="0" y1="0" x2="0" y2="1"><stop offset="0" stop-color="#2e2e2e"/><stop offset="1" stop-color="#7d7d7d"/></linearGradient></defs><polygon points="4.600,0.600 8.300,5 0.900,5" fill="url(#au)"/></svg>
 <svg class="abs" style="left:1536px;top:918px" width="9" height="6"><defs><linearGradient id="ad" x1="0" y1="0" x2="0" y2="1"><stop offset="0" stop-color="#2e2e2e"/><stop offset="1" stop-color="#7d7d7d"/></linearGradient></defs><polygon points="0.800,0.900 8.400,0.900 4.600,5.200" fill="url(#ad)"/></svg>
 <div class="abs thumbv" style="left:1532px;top:225px;width:15px;height:16px"></div>
 <svg class="abs" style="left:65px;top:933px" width="6" height="9"><polygon points="0.500,4.500 5,0.500 5,8.500" fill="#2a2a2a"/></svg>
 <svg class="abs" style="left:1520px;top:933px" width="6" height="9"><polygon points="5.500,4.500 1,0.500 1,8.500" fill="#2a2a2a"/></svg>
 <div class="abs thumbh" style="left:78px;top:930px;width:1283px;height:15px"></div>
 <svg class="abs" style="left:714px;top:934px" width="11" height="8"><path d="M2.500 0v7.500M5.500 0v7.500M8.500 0v7.500" stroke="#f4f4f4" stroke-width="1"/><path d="M1.500 0v7.500M4.500 0v7.500M7.500 0v7.500" stroke="#3c3c3c" stroke-width="1"/></svg>
 <svg class="abs" style="left:1558px;top:963px;z-index:3" width="12" height="12"><path d="M8 1h2v2h-2zM5 4h2v2h-2zM8 4h2v2h-2zM2 7h2v2h-2zM5 7h2v2h-2zM8 7h2v2h-2z" fill="#fff"/></svg>
 <svg class="abs" style="left:1559px;top:460px" width="10" height="34"><ellipse cx="5" cy="5" rx="3.600" ry="3" fill="#c4c4c4"/><ellipse cx="5" cy="17" rx="3.600" ry="3" fill="#c4c4c4"/><ellipse cx="5" cy="29" rx="3.600" ry="3" fill="#c4c4c4"/></svg>
<!--/SCROLL-->

 <div id="status" class="abs"></div>
</div>
</body>
</html>
